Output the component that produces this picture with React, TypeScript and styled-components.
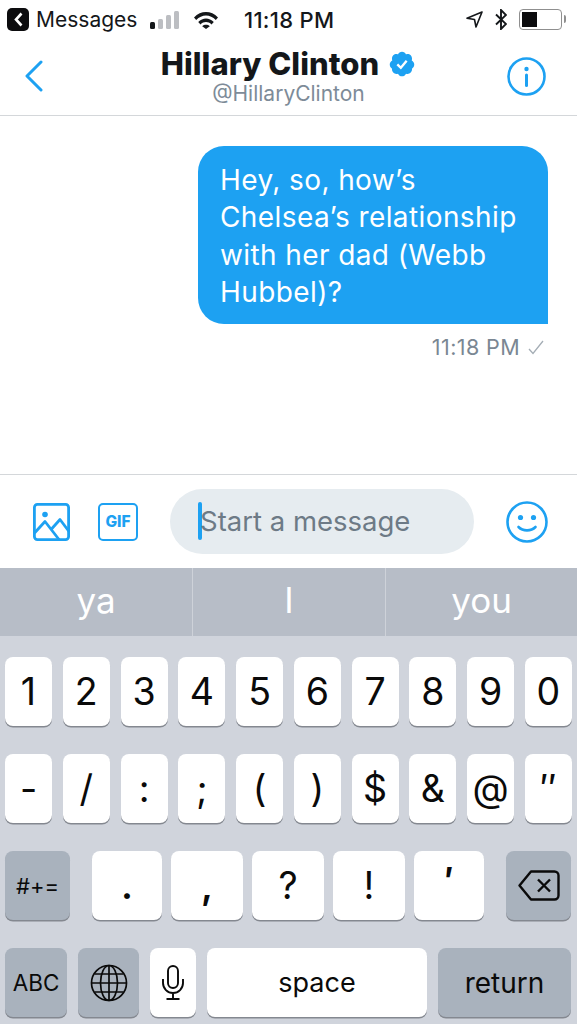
import React from "react";
import styled, { createGlobalStyle } from "styled-components";

const GlobalStyle = createGlobalStyle`
    html, body {
        margin: 0;
        padding: 0;
        background: #fff;
    }
    body {
        font-family: Inter, "Liberation Sans", sans-serif;
    }
`;

const Screen = styled.div`
    width: 577px;
    height: 1024px;
    display: flex;
    flex-direction: column;
    overflow: hidden;
    background: #fff;
`;

const StatusBar = styled.div`
    height: 39px;
    display: flex;
    align-items: center;
    padding: 0 15px 0 7px;
    font-size: 21px;
    color: #14171a;
    flex-shrink: 0;
`;

const BackBadge = styled.div`
    width: 22px;
    height: 23px;
    border-radius: 5px;
    background: #0c0c0e;
    display: flex;
    align-items: center;
    justify-content: center;
    margin-right: 7px;
`;

const Carrier = styled.span`
    width: 114px;
`;

const Signal = styled.div`
    display: flex;
    align-items: flex-end;
    gap: 3px;
    width: 44px;
    height: 18px;
`;

const SignalBar = styled.span<{ $h: number; $on?: boolean }>`
    width: 5px;
    height: ${(p) => p.$h}px;
    border-radius: 1.5px;
    background: ${(p) => (p.$on ? "#14171a" : "#bcbec2")};
`;

const Clock = styled.span`
    margin-left: 26px;
    font-size: 22px;
    font-weight: 500;
    letter-spacing: 0.3px;
`;

const StatusRight = styled.div`
    margin-left: auto;
    display: flex;
    align-items: center;
    gap: 12px;
`;

const Battery = styled.div`
    position: relative;
    width: 43px;
    height: 21px;
    box-sizing: border-box;
    border: 1.5px solid #8f8f8f;
    border-radius: 4px;
    padding: 2px;
    display: flex;

    &::after {
        content: "";
        position: absolute;
        right: -5px;
        top: 5px;
        width: 2px;
        height: 8px;
        background: #8f8f8f;
        border-radius: 0 2px 2px 0;
    }
`;

const BatteryFill = styled.span`
    width: 15px;
    background: #0c0c0e;
`;

const Header = styled.header`
    height: 77px;
    flex-shrink: 0;
    box-sizing: border-box;
    border-bottom: 1.5px solid #d4d7da;
    display: grid;
    grid-template-columns: 102px 1fr 102px;
    align-items: center;
`;

const HeaderIcon = styled.div<{ $start?: boolean }>`
    display: flex;
    justify-content: ${(p) => (p.$start ? "flex-start" : "center")};
    padding-left: ${(p) => (p.$start ? "25px" : "0")};
    margin-top: -2px;
`;

const HeaderTitle = styled.div`
    display: flex;
    flex-direction: column;
    align-items: center;
    margin-top: -2px;
`;

const NameRow = styled.div`
    display: flex;
    align-items: center;
    gap: 9px;
    white-space: nowrap;
`;

const Name = styled.span`
    font-size: 31px;
    line-height: 36px;
    font-weight: 800;
    letter-spacing: 0.05px;
    color: #14171a;
`;

const Handle = styled.span`
    font-size: 21px;
    line-height: 24px;
    color: #7d8b98;
`;

const Thread = styled.main`
    flex: 1;
    display: flex;
    flex-direction: column;
    align-items: flex-end;
    padding: 30px 29px 0 0;
`;

const Bubble = styled.div`
    width: 350px;
    height: 178px;
    box-sizing: border-box;
    padding: 16px 0 0 22px;
    border-radius: 26px 26px 0 26px;
    background: #1da1f2;
    color: #fff;
    font-size: 28px;
    line-height: 37.3px;
    letter-spacing: 0.4px;
    white-space: nowrap;
`;

const Meta = styled.div`
    margin-top: 11px;
    margin-right: 4px;
    display: flex;
    align-items: center;
    gap: 8px;
    font-size: 21.5px;
    line-height: 24px;
    letter-spacing: 0.4px;
    color: #7a8793;
`;

const Composer = styled.div`
    height: 94px;
    flex-shrink: 0;
    box-sizing: border-box;
    border-top: 1.5px solid #d4d7da;
    display: flex;
    align-items: center;
    padding-left: 33px;
`;

const MessageInput = styled.div`
    width: 304px;
    height: 65px;
    margin-left: 32px;
    border-radius: 33px;
    background: #e6ecf0;
    display: flex;
    align-items: center;
    padding: 0 0 2px 28px;
    box-sizing: border-box;
    font-size: 27.5px;
    color: #6d7a86;
`;

const Caret = styled.span`
    width: 4px;
    height: 38px;
    background: #1da1f2;
    border-radius: 2px;
    margin-right: -2px;
`;

const Keyboard = styled.div`
    height: 456px;
    flex-shrink: 0;
    display: flex;
    flex-direction: column;
    background: #d0d4dc;
`;

const Suggestions = styled.div`
    height: 68px;
    background: #b7bdc7;
    display: grid;
    grid-template-columns: 192px 193px 192px;
`;

const Suggestion = styled.div<{ $divided?: boolean }>`
    display: flex;
    align-items: center;
    justify-content: center;
    padding-bottom: 4px;
    font-size: 35px;
    color: #fff;
    border-left: ${(p) => (p.$divided ? "1.5px solid #ced2d9" : "none")};
`;

const Keys = styled.div`
    padding: 21px 5px 0;
    display: flex;
    flex-direction: column;
    gap: 28px;
`;

const KeyRow = styled.div`
    height: 69px;
    display: flex;
`;

const NumberRow = styled(KeyRow)`
    justify-content: space-between;
`;

const Key = styled.div<{ $w: number; $gray?: boolean; $size?: number; $gap?: number }>`
    width: ${(p) => p.$w}px;
    margin-left: ${(p) => p.$gap ?? 0}px;
    height: 69px;
    box-sizing: border-box;
    border-radius: 8px;
    background: ${(p) => (p.$gray ? "#a9b2bd" : "#fff")};
    box-shadow: 0 1.5px 0 #848890;
    display: flex;
    align-items: center;
    justify-content: center;
    flex-shrink: 0;
    font-size: ${(p) => p.$size ?? 37.5}px;
    font-weight: 400;
    color: #0a0a0a;
`;

const HeavyGlyph = styled.span`
    font-weight: 600;
`;

const HighGlyph = styled(HeavyGlyph)`
    transform: translateY(-5px);
`;

const BackIcon = () => (
    <svg width="9" height="15" viewBox="0 0 9 15">
        <path d="M7.500 1.500 2 7.500l5.500 6" fill="none" stroke="#fff" strokeWidth="2.600" />
    </svg>
);

const WifiIcon = () => (
    <svg width="24" height="18" viewBox="0 0 24 18">
        <path d="M0 6.500C6.800-.8 17.200-.8 24 6.500L21.800 9C16.200 3 7.800 3 2.200 9z" fill="#14171a" />
        <path d="M4.200 11C8.800 6.200 15.200 6.200 19.800 11l-2.300 2.400c-3.200-3.200-7.800-3.200-11 0z" fill="#14171a" />
        <path d="M8.200 15.200c2.200-1.900 5.400-1.900 7.600 0L12 18z" fill="#14171a" />
    </svg>
);

const LocationIcon = () => (
    <svg width="17" height="17" viewBox="0 0 17 17">
        <path d="M16 1 1 7.200l7.500 1.300L10 16z" fill="none" stroke="#14171a" strokeWidth="1.600" strokeLinejoin="round" />
    </svg>
);

const BluetoothIcon = () => (
    <svg width="12" height="21" viewBox="0 0 12 21">
        <path d="M1 5.500 11 15l-5 5V1l5 5L1 15.500" fill="none" stroke="#14171a" strokeWidth="1.900" />
    </svg>
);

const ChevronLeft = () => (
    <svg width="18" height="32" viewBox="0 0 18 32">
        <path d="M16 2 2 16l14 14" fill="none" stroke="#1da1f2" strokeWidth="3" strokeLinecap="round" strokeLinejoin="round" />
    </svg>
);

const InfoIcon = () => (
    <svg width="39" height="39" viewBox="0 0 39 39">
        <circle cx="19.500" cy="19.500" r="18" fill="none" stroke="#1da1f2" strokeWidth="2.600" />
        <circle cx="19.500" cy="12" r="2.200" fill="#1da1f2" />
        <rect x="18" y="16.500" width="3" height="13.500" rx="1.500" fill="#1da1f2" />
    </svg>
);

const VerifiedBadge = () => (
    <svg width="28" height="28" viewBox="0 0 24 24">
        <path
            d="M22.500 12.500c0-1.580-.875-2.950-2.148-3.600.154-.435.238-.905.238-1.400 0-2.210-1.710-3.998-3.818-3.998-.47 0-.92.084-1.336.25C14.818 2.415 13.510 1.500 12 1.500s-2.816.917-3.437 2.250c-.415-.165-.866-.25-1.336-.25-2.110 0-3.818 1.790-3.818 4 0 .494.083.964.237 1.400-1.272.65-2.147 2.018-2.147 3.600 0 1.495.782 2.798 1.942 3.486-.02.17-.032.34-.032.514 0 2.210 1.708 4 3.818 4 .47 0 .92-.086 1.335-.25.62 1.334 1.926 2.250 3.437 2.250 1.512 0 2.818-.916 3.437-2.250.415.163.865.248 1.336.248 2.110 0 3.818-1.790 3.818-4 0-.174-.012-.344-.033-.513 1.158-.687 1.943-1.990 1.943-3.484z"
            fill="#1da1f2"
        />
        <path d="m8 12.300 3 3 5-6" fill="none" stroke="#fff" strokeWidth="2" />
    </svg>
);

const CheckMark = () => (
    <svg width="16" height="15" viewBox="0 0 16 15">
        <path d="M1 9l4 4.500L15 1" fill="none" stroke="#a4adb5" strokeWidth="1.300" />
    </svg>
);

const ImageIcon = () => (
    <svg width="37" height="38" viewBox="0 0 37 38">
        <rect x="1.400" y="1.400" width="34.200" height="35.200" rx="3" fill="none" stroke="#1da1f2" strokeWidth="2.800" />
        <circle cx="12" cy="11.500" r="2.800" fill="#1da1f2" />
        <path d="M1.500 30 12 18.500 26 36.500M18.500 26l8.500-9.500 9 12" fill="none" stroke="#1da1f2" strokeWidth="2.800" strokeLinejoin="round" />
    </svg>
);

const GifIconBox = styled.div`
    width: 40px;
    height: 38px;
    box-sizing: border-box;
    border: 2.800px solid #1da1f2;
    border-radius: 5px;
    margin-left: 28px;
    display: flex;
    align-items: center;
    justify-content: center;
    font-size: 15.500px;
    font-weight: 800;
    color: #1da1f2;
`;

const SmileWrap = styled.div`
    margin-left: 32px;
    display: flex;
`;

const SmileIcon = () => (
    <svg width="42" height="42" viewBox="0 0 42 42">
        <circle cx="21" cy="21" r="19.500" fill="none" stroke="#1da1f2" strokeWidth="2.600" />
        <circle cx="14.500" cy="16.500" r="2.600" fill="#1da1f2" />
        <circle cx="27.500" cy="16.500" r="2.600" fill="#1da1f2" />
        <path d="M12.500 26c4.500 4.500 12.500 4.500 17 0" fill="none" stroke="#1da1f2" strokeWidth="2.600" strokeLinecap="round" />
    </svg>
);

const DeleteIcon = () => (
    <svg width="42" height="31" viewBox="0 0 42 31">
        <path d="M13 1.500h23.500a4 4 0 0 1 4 4v20a4 4 0 0 1-4 4H13L1.500 15.500z" fill="none" stroke="#0a0a0a" strokeWidth="2.400" strokeLinejoin="round" />
        <path d="m20 9.500 12 12m0-12-12 12" fill="none" stroke="#0a0a0a" strokeWidth="2.400" />
    </svg>
);

const GlobeIcon = () => (
    <svg width="38" height="38" viewBox="0 0 38 38">
        <g fill="none" stroke="#0a0a0a" strokeWidth="1.700">
            <circle cx="19" cy="19" r="17.500" />
            <ellipse cx="19" cy="19" rx="8.500" ry="17.500" />
            <path d="M19 1.500v35M1.500 19h35M4.500 10h29M4.500 28h29" />
        </g>
    </svg>
);

const MicIcon = () => (
    <svg width="22" height="35" viewBox="0 0 22 35">
        <g fill="none" stroke="#0a0a0a" strokeWidth="1.900">
            <rect x="6" y="1" width="10" height="22" rx="5" />
            <path d="M1 14v4a10 10 0 0 0 20 0v-4M11 28v6M4.500 34h13" />
        </g>
    </svg>
);

const numbers = ["1", "2", "3", "4", "5", "6", "7", "8", "9", "0"];
const symbols = ["-", "/", ":", ";", "(", ")", "$", "&", "@", "\u2033"];

const App = () => {
    return (
        <Screen>
            <GlobalStyle />
            <StatusBar>
                <BackBadge>
                    <BackIcon />
                </BackBadge>
                <Carrier>Messages</Carrier>
                <Signal>
                    <SignalBar $h={7} $on />
                    <SignalBar $h={10} />
                    <SignalBar $h={14} />
                    <SignalBar $h={18} />
                </Signal>
                <WifiIcon />
                <Clock>11:18 PM</Clock>
                <StatusRight>
                    <LocationIcon />
                    <BluetoothIcon />
                    <Battery>
                        <BatteryFill />
                    </Battery>
                </StatusRight>
            </StatusBar>
            <Header>
                <HeaderIcon $start>
                    <ChevronLeft />
                </HeaderIcon>
                <HeaderTitle>
                    <NameRow>
                        <Name>Hillary Clinton</Name>
                        <VerifiedBadge />
                    </NameRow>
                    <Handle>@HillaryClinton</Handle>
                </HeaderTitle>
                <HeaderIcon>
                    <InfoIcon />
                </HeaderIcon>
            </Header>
            <Thread>
                <Bubble>
                    Hey, so, how’s
                    <br />
                    Chelsea’s relationship
                    <br />
                    with her dad (Webb
                    <br />
                    Hubbel)?
                </Bubble>
                <Meta>
                    11:18 PM
                    <CheckMark />
                </Meta>
            </Thread>
            <Composer>
                <ImageIcon />
                <GifIconBox>GIF</GifIconBox>
                <MessageInput>
                    <Caret />
                    Start a message
                </MessageInput>
                <SmileWrap>
                    <SmileIcon />
                </SmileWrap>
            </Composer>
            <Keyboard>
                <Suggestions>
                    <Suggestion>ya</Suggestion>
                    <Suggestion $divided>I</Suggestion>
                    <Suggestion $divided>you</Suggestion>
                </Suggestions>
                <Keys>
                    <NumberRow>
                        {numbers.map((n) => (
                            <Key key={n} $w={47}>{n}</Key>
                        ))}
                    </NumberRow>
                    <NumberRow>
                        {symbols.map((s) => (
                            <Key key={s} $w={47}>{s}</Key>
                        ))}
                    </NumberRow>
                    <KeyRow>
                        <Key $w={65} $gray $size={22}>#+=</Key>
                        <Key $w={70} $gap={22}><HeavyGlyph>.</HeavyGlyph></Key>
                        <Key $w={72} $gap={9}><HeavyGlyph>,</HeavyGlyph></Key>
                        <Key $w={72} $gap={9}>?</Key>
                        <Key $w={72} $gap={9}>!</Key>
                        <Key $w={70} $gap={9}><HighGlyph>′</HighGlyph></Key>
                        <Key $w={65} $gap={22} $gray><DeleteIcon /></Key>
                    </KeyRow>
                    <KeyRow>
                        <Key $w={62} $gray $size={22.500}>ABC</Key>
                        <Key $w={61} $gap={11} $gray><GlobeIcon /></Key>
                        <Key $w={46} $gap={11}><MicIcon /></Key>
                        <Key $w={220} $gap={11} $size={27}>space</Key>
                        <Key $w={133} $gap={11} $gray $size={28}>return</Key>
                    </KeyRow>
                </Keys>
            </Keyboard>
        </Screen>
    );
};

export default App;
